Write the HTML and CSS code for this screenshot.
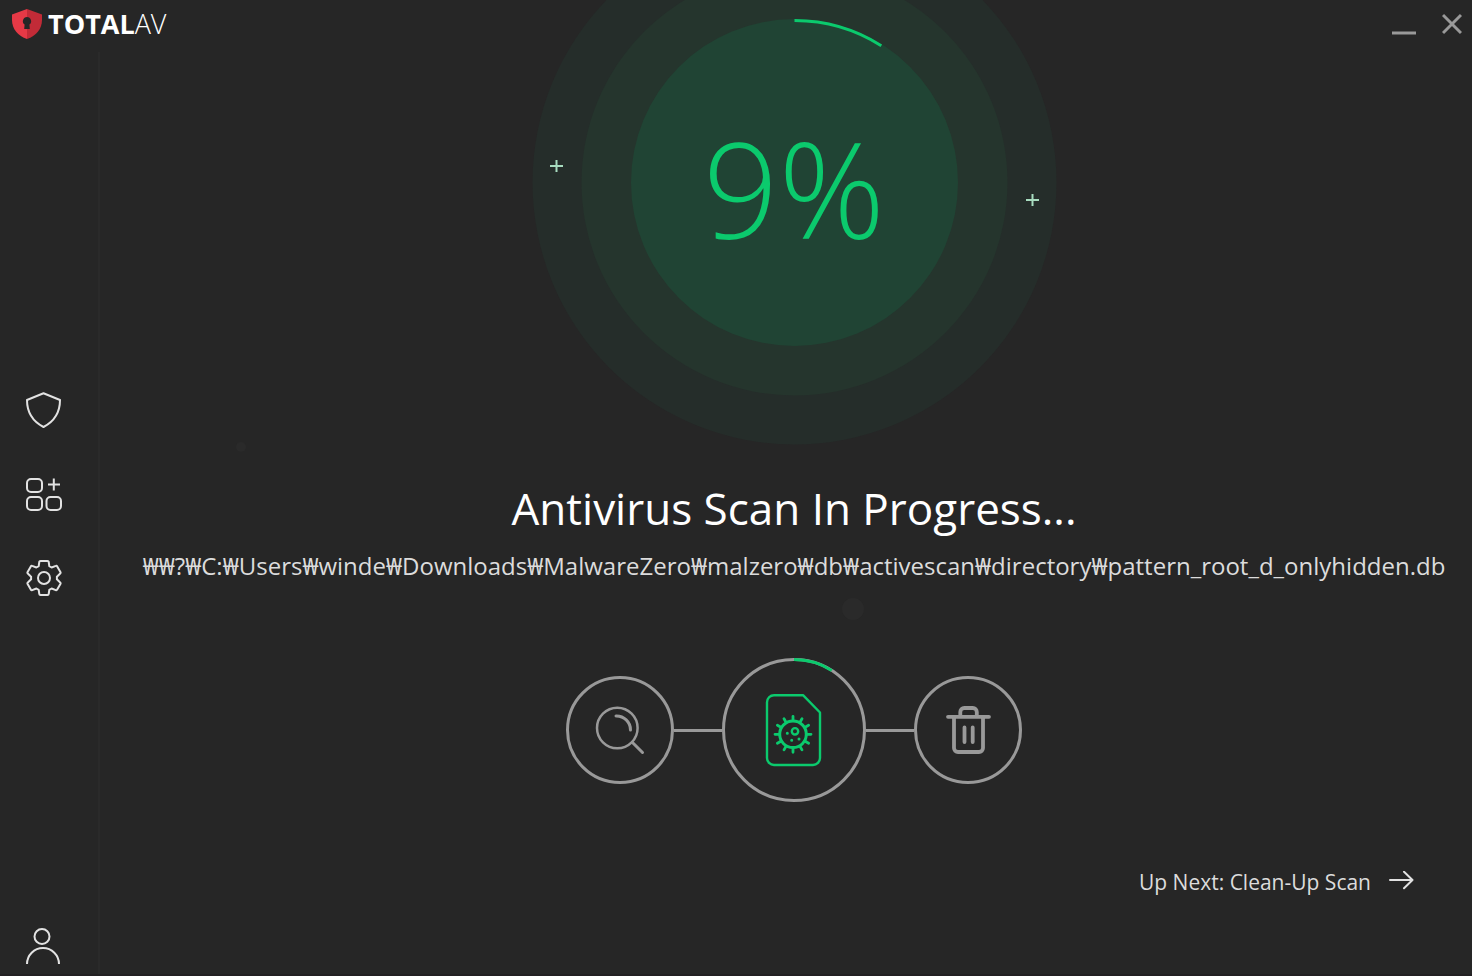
FILE: index.html
```html
<!doctype html>
<html lang="en">

<head>
    <meta charset="utf-8">
    <meta name="viewport" content="width=device-width, initial-scale=1">
    <title>TotalAV</title>
    <link rel="stylesheet" href="styles.css">
</head>

<body>
    <div class="app">
        <header class="titlebar">
            <div class="logo">
                <svg class="logo-mark" width="30" height="30" viewBox="0 0 30 30">
                    <path fill="#e63946" d="M15 0L0 5.500V11c0 9 6 16 15 19z" />
                    <path fill="#c22b37" d="M15 0l15 5.500V11c0 9-6 16-15 19z" />
                    <path fill="#262626" d="M15 8a4.200 4.200 0 0 0-2.400 7.600L12.200 20h5.600l-.4-4.400A4.200 4.200 0 0 0 15 8z" />
                </svg>
                <span class="logo-text"><b>TOTAL</b>AV</span>
            </div>
            <div class="window-buttons">
                <button type="button" aria-label="Minimize">
                    <svg width="24" height="24" viewBox="0 0 24 24"><path d="M0 21h24" /></svg>
                </button>
                <button type="button" aria-label="Close">
                    <svg width="20" height="24" viewBox="0 0 20 24"><path d="M1 3l18 18M19 3L1 21" /></svg>
                </button>
            </div>
        </header>

        <aside class="sidebar">
            <nav class="menu">
                <a href="#" aria-label="Protection">
                    <svg width="36" height="36" viewBox="0 0 36 36">
                        <path d="M17.500 1.300L1 8c0 12 6 21.500 16.500 27C28 29.500 34 20 34 8z" />
                    </svg>
                </a>
                <a href="#" aria-label="Apps">
                    <svg width="36" height="36" viewBox="0 0 36 36">
                        <rect x="1" y="3" width="15" height="13" rx="4" />
                        <rect x="1" y="21" width="15" height="13" rx="4" />
                        <rect x="20.500" y="21" width="14.500" height="13" rx="4" />
                        <path d="M27.800 2.500v12M22 8.500h12" />
                    </svg>
                </a>
                <a href="#" aria-label="Settings">
                    <svg width="36" height="36" viewBox="0 0 36 36">
                        <path d="M14.500 1H21.500Q22.600 1 22.700 2L23.300 6.200 25.600 7.500 29.800 5.900Q30.700 5.500 31.200 6.400L34.400 12Q34.900 13 34.200 13.600L30.900 16.700V19.300L34.200 22.400Q34.900 23 34.400 24L31.200 29.600Q30.700 30.500 29.800 30.100L25.600 28.500 23.300 29.800 22.700 34Q22.600 35 21.500 35H14.500Q13.400 35 13.300 34L12.700 29.800 10.400 28.500 6.200 30.100Q5.300 30.500 4.800 29.600L1.600 24Q1.100 23 1.800 22.400L5.100 19.300V16.700L1.800 13.600Q1.100 13 1.600 12L4.800 6.400Q5.300 5.500 6.200 5.900L10.400 7.500 12.700 6.200 13.300 2Q13.400 1 14.500 1z" />
                        <circle cx="18" cy="18" r="6" />
                    </svg>
                </a>
            </nav>
            <a class="account" href="#" aria-label="Account">
                <svg width="36" height="36" viewBox="0 0 36 36">
                    <circle cx="16" cy="8.500" r="7.500" />
                    <path d="M1 36a16 16 0 0 1 32 0" />
                </svg>
            </a>
        </aside>

        <main class="scan">
            <!-- floating particles in the background -->
            <span class="particle particle-small"></span>
            <span class="particle particle-big"></span>

            <!-- overall progress, the rings run off the top edge -->
            <div class="gauge">
                <svg class="gauge-rings" width="526" height="446" viewBox="0 0 526 446">
                    <circle cx="263.500" cy="182.500" r="262" fill="#252d2a" />
                    <circle cx="263.500" cy="182.500" r="213" fill="#25352d" />
                    <circle cx="263.500" cy="182.500" r="163.500" fill="#204434" />
                    <circle class="progress" cx="263.500" cy="182.500" r="162" pathLength="100" transform="rotate(-90 263.500 182.500)" />
                    <path class="spark" d="M19 166h13M25.500 160v12M495 200h13M501.500 194v12" />
                </svg>
                <div class="gauge-value">9%</div>
            </div>

            <h1>Antivirus Scan In Progress...</h1>
            <p class="path">₩₩?₩C:₩Users₩winde₩Downloads₩MalwareZero₩malzero₩db₩activescan₩directory₩pattern_root_d_onlyhidden.db</p>

            <div class="steps">
                <div class="step">
                    <svg width="52" height="52" viewBox="0 0 52 52">
                        <circle cx="23.300" cy="24" r="20.300" stroke-width="2.500" />
                        <path d="M22 12a14 14 0 0 1 14.500 14M38.500 38.500L48.500 48.500" stroke-width="3" />
                    </svg>
                </div>
                <div class="step-line"></div>
                <div class="step-active">
                    <svg width="144" height="144" viewBox="0 0 144 144">
                        <circle class="track" cx="72" cy="72" r="70.500" />
                        <circle class="progress" cx="72" cy="72" r="70.500" pathLength="100" transform="rotate(-90 72 72)" />
                        <g class="file" transform="translate(44 36)">
                            <path d="M37 1.200H8a7 7 0 0 0-7 7V64a7 7 0 0 0 7 7h39a7 7 0 0 0 7-7V18.500z" />
                            <g transform="translate(27 40.300)">
                                <circle r="13.300" stroke-width="3" />
                                <path d="M0-14v-4M0 14v4M-14 0h-4M14 0h4M7-12.100l2-3.500M12.100-7l3.500-2M12.100 7l3.500 2M7 12.100l2 3.500M-7 12.100l-2 3.500M-12.100 7l-3.500 2M-12.100-7l-3.500-2M-7-12.100l-2-3.500" stroke-width="2.800" />
                                <circle cx="2" cy="-3" r="3.200" stroke-width="2.400" />
                                <path d="M-5.700-1v0M-1.300 6v0M6 4.700v0" stroke-width="3" />
                            </g>
                        </g>
                    </svg>
                </div>
                <div class="step-line"></div>
                <div class="step">
                    <svg width="48" height="48" viewBox="0 0 48 48">
                        <path d="M4 10.800h41M10 11v31a4 4 0 0 0 4 4h21a4 4 0 0 0 4-4V11M16.300 10V6a4 4 0 0 1 4-4h8.500a4 4 0 0 1 4 4v4" stroke-width="3.800" />
                        <path d="M20.500 21.500v14.500M28.700 21.500v14.500" stroke-width="3.800" />
                    </svg>
                </div>
            </div>

            <a class="next" href="#">
                <span>Up Next: Clean-Up Scan</span>
                <svg width="25" height="22" viewBox="0 0 25 22"><path d="M1 9h22.500M15 .8l8.500 8.200-8.500 8.200" /></svg>
            </a>
        </main>
    </div>
</body>

</html>
```
FILE: styles.css
```css
* {
    box-sizing: border-box;
}

body {
    margin: 0;
    background: #262626;
    color: #dcdcdc;
    font-family: "Open Sans", "Noto Sans", sans-serif;
}

svg {
    display: block;
    fill: none;
    stroke-linecap: round;
    stroke-linejoin: round;
}

a {
    color: inherit;
    text-decoration: none;
}

.app {
    display: grid;
    grid-template-columns: 100px 1fr;
    grid-template-rows: 52px 1fr;
    min-height: 100vh;
    border-bottom: 2px solid #222022;
}

/* Title bar, sits over the top of the rings */

.titlebar {
    grid-area: 1 / 1 / 2 / 3;
    z-index: 1;
    display: flex;
    justify-content: space-between;
    align-items: center;
    padding: 0 10px 4px 12px;
}

.logo {
    display: flex;
    align-items: center;
    gap: 6px;
}

.logo-text {
    font-size: 27px;
    line-height: 30px;
    font-weight: 300;
    color: #fff;
}

.logo-text b {
    font-weight: 700;
}

.window-buttons {
    display: flex;
    gap: 26px;
}

.window-buttons button {
    padding: 0;
    border: 0;
    background: none;
    cursor: pointer;
}

.window-buttons svg {
    stroke: #999;
    stroke-width: 3;
    stroke-linecap: butt;
}

/* Sidebar */

.sidebar {
    grid-area: 2 / 1 / 3 / 2;
    display: grid;
    grid-template-rows: 1fr auto 1fr;
    padding: 0 0 10px 26px;
    border-right: 2px solid #2a2a2a;
}

.sidebar svg {
    stroke: #e2e2e2;
    stroke-width: 2;
    stroke-linecap: butt;
}

.menu {
    grid-row: 2;
    display: flex;
    flex-direction: column;
    gap: 48px;
    padding-bottom: 28px;
}

.account {
    grid-row: 3;
    align-self: end;
}

/* Scan screen */

.scan {
    grid-area: 1 / 2 / 3 / 3;
    position: relative;
    display: flex;
    flex-direction: column;
    align-items: center;
    padding-left: 16px;
}

.particle {
    position: absolute;
    border-radius: 50%;
    background: #2a2a2a;
}

.particle-small {
    left: 136px;
    top: 442px;
    width: 10px;
    height: 10px;
}

.particle-big {
    left: 742px;
    top: 598px;
    width: 22px;
    height: 22px;
}

.gauge {
    display: grid;
    justify-items: center;
}

.gauge-rings,
.gauge-value {
    grid-area: 1 / 1;
}

.gauge-value {
    padding-top: 96px;
    font-size: 132px;
    line-height: 184px;
    font-weight: 300;
    color: #0bca6d;
}

.progress {
    stroke: #0bca6d;
    stroke-width: 3;
    stroke-linecap: butt;
    stroke-dasharray: 9 91;
}

.spark {
    stroke: #a8dcbf;
    stroke-width: 2;
    stroke-linecap: butt;
}

h1 {
    margin: 30px 0 0;
    font-size: 44px;
    line-height: 64px;
    font-weight: 400;
    color: #fff;
}

.path {
    margin: 8px 0 0;
    font-size: 24px;
    line-height: 36px;
}

.steps {
    display: flex;
    align-items: center;
    margin-top: 74px;
    stroke: #999;
}

.step {
    display: grid;
    place-items: center;
    width: 108px;
    height: 108px;
    border: 3px solid #999;
    border-radius: 50%;
}

.step-line {
    width: 48px;
    height: 3px;
    background: #999;
}

.track {
    stroke-width: 3;
}

.file {
    stroke: #0bca6d;
    stroke-width: 2.400px;
}

.next {
    display: flex;
    align-items: center;
    align-self: flex-end;
    gap: 18px;
    margin: 64px 58px 0 0;
    font-size: 21px;
    line-height: 32px;
}

.next svg {
    stroke: #e2e2e2;
    stroke-width: 2;
}
```
